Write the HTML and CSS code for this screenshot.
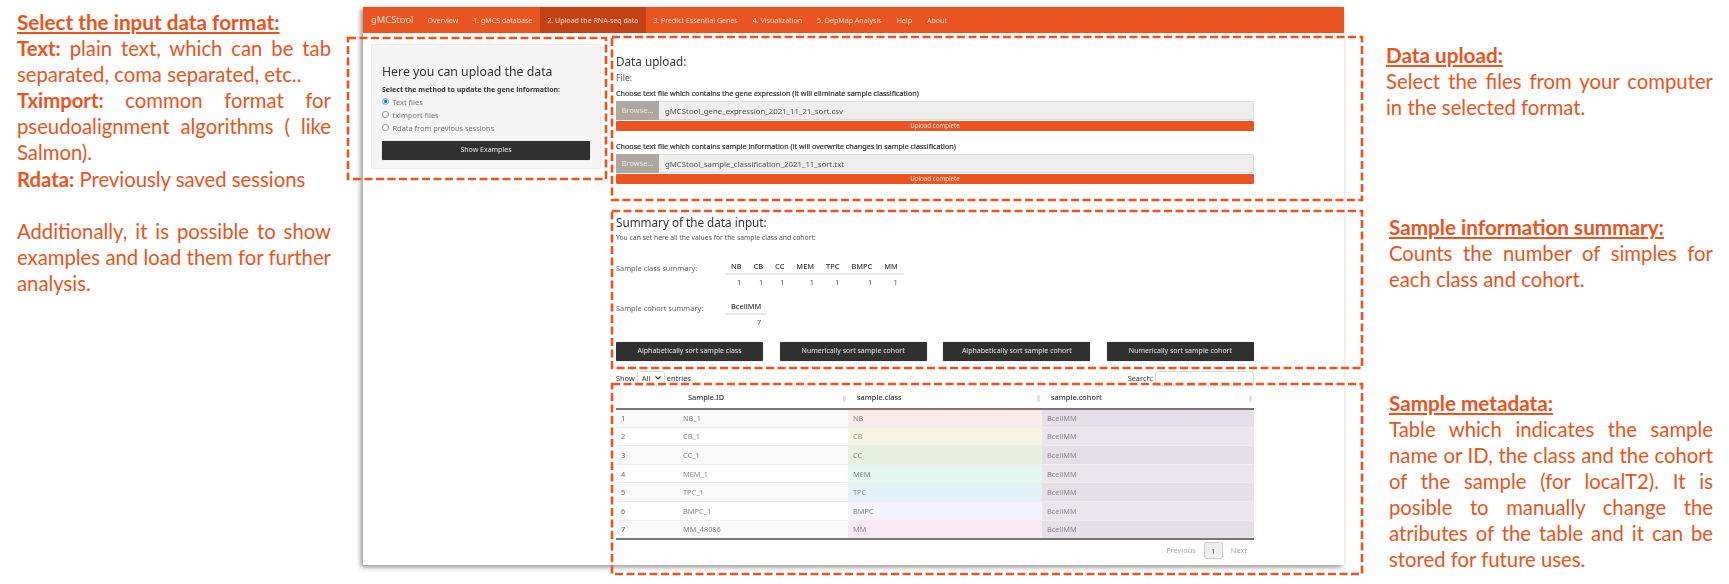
FILE: index.html
```html
<!DOCTYPE html>
<html lang="en">
<head>
    <meta charset="UTF-8">
    <title>gMCStool - Upload the RNA-seq data</title>
    <link rel="stylesheet" href="styles.css">
</head>
<body>
    <div class="figure">
        <div class="notes-left">
            <p class="note-title">Select the input data format:</p>
            <p><strong>Text:</strong> plain text, which can be tab separated, coma separated, etc..</p>
            <p><strong>Tximport:</strong> common format for pseudoalignment algorithms ( like Salmon).</p>
            <p><strong>Rdata:</strong> Previously saved sessions</p>
            <p class="note-gap">Additionally, it is possible to show examples and load them for further analysis.</p>
        </div>

        <div class="app">
            <div class="navbar">
                <span class="brand">gMCStool</span>
                <a class="nav-item">Overview</a>
                <a class="nav-item">1. gMCS database</a>
                <a class="nav-item active">2. Upload the RNA-seq data</a>
                <a class="nav-item">3. Predict Essential Genes</a>
                <a class="nav-item">4. Visualization</a>
                <a class="nav-item">5. DepMap Analysis</a>
                <a class="nav-item">Help</a>
                <a class="nav-item">About</a>
            </div>

            <div class="app-body">
                <div class="sidebar">
                    <div class="well">
                        <h3>Here you can upload the data</h3>
                        <div class="field-label">Select the method to update the gene information:</div>
                        <div class="radio"><span class="radio-dot checked"></span>Text files</div>
                        <div class="radio"><span class="radio-dot"></span>tximport files</div>
                        <div class="radio"><span class="radio-dot"></span>Rdata from previous sessions</div>
                        <div class="btn btn-wide">Show Examples</div>
                    </div>
                </div>

                <div class="main">
                    <h3 class="upload-title">Data upload:</h3>
                    <div class="file-title">File:</div>

                    <div class="field-label">Choose text file which contains the gene expression (it will eliminate sample classification)</div>
                    <div class="file-input">
                        <span class="browse">Browse...</span>
                        <span class="file-name">gMCStool_gene_expression_2021_11_21_sort.csv</span>
                    </div>
                    <div class="progress">Upload complete</div>

                    <div class="field-label second">Choose text file which contains sample information (it will overwrite changes in sample classification)</div>
                    <div class="file-input">
                        <span class="browse">Browse...</span>
                        <span class="file-name">gMCStool_sample_classification_2021_11_sort.txt</span>
                    </div>
                    <div class="progress">Upload complete</div>

                    <h3 class="summary-title">Summary of the data input:</h3>
                    <div class="summary-sub">You can set here all the values for the sample class and cohort:</div>

                    <div class="summary-row">
                        <span class="summary-label">Sample class summary:</span>
                        <table class="mini-table">
                            <tr><th>NB</th><th>CB</th><th>CC</th><th>MEM</th><th>TPC</th><th>BMPC</th><th>MM</th></tr>
                            <tr><td>1</td><td>1</td><td>1</td><td>1</td><td>1</td><td>1</td><td>1</td></tr>
                        </table>
                    </div>
                    <div class="summary-row cohort">
                        <span class="summary-label">Sample cohort summary:</span>
                        <table class="mini-table">
                            <tr><th>BcellMM</th></tr>
                            <tr><td>7</td></tr>
                        </table>
                    </div>

                    <div class="sort-buttons">
                        <div class="btn">Alphabetically sort sample class</div>
                        <div class="btn">Numerically sort sample cohort</div>
                        <div class="btn">Alphabetically sort sample cohort</div>
                        <div class="btn">Numerically sort sample cohort</div>
                    </div>

                    <div class="table-tools">
                        <span>Show</span>
                        <span class="select">All <svg width="6" height="4" viewBox="0 0 6 4"><path d="M0.5 0.5 L3 3 L5.5 0.5" fill="none" stroke="#333" stroke-width="1.2"/></svg></span>
                        <span>entries</span>
                        <span class="search">Search:</span>
                        <span class="search-box"></span>
                    </div>

                    <table class="data-table">
                        <thead>
                            <tr>
                                <th class="col-id">Sample.ID<span class="sort"></span></th>
                                <th>sample.class<span class="sort"></span></th>
                                <th>sample.cohort<span class="sort"></span></th>
                            </tr>
                        </thead>
                        <tbody>
                            <tr class="odd"><td class="id"><span class="row-num">1</span>NB_1</td><td class="c-nb">NB</td><td class="cohort-cell">BcellMM</td></tr>
                            <tr><td class="id"><span class="row-num">2</span>CB_1</td><td class="c-cb">CB</td><td class="cohort-cell">BcellMM</td></tr>
                            <tr class="odd"><td class="id"><span class="row-num">3</span>CC_1</td><td class="c-cc">CC</td><td class="cohort-cell">BcellMM</td></tr>
                            <tr><td class="id"><span class="row-num">4</span>MEM_1</td><td class="c-mem">MEM</td><td class="cohort-cell">BcellMM</td></tr>
                            <tr class="odd"><td class="id"><span class="row-num">5</span>TPC_1</td><td class="c-tpc">TPC</td><td class="cohort-cell">BcellMM</td></tr>
                            <tr><td class="id"><span class="row-num">6</span>BMPC_1</td><td class="c-bmpc">BMPC</td><td class="cohort-cell">BcellMM</td></tr>
                            <tr class="odd"><td class="id"><span class="row-num">7</span>MM_48086</td><td class="c-mm">MM</td><td class="cohort-cell">BcellMM</td></tr>
                        </tbody>
                    </table>

                    <div class="pagination">
                        <span>Previous</span>
                        <span class="page-current">1</span>
                        <span>Next</span>
                    </div>
                </div>
            </div>
        </div>

        <div class="notes-right">
            <div class="note note-upload">
                <p class="note-title">Data upload:</p>
                <p>Select the files from your computer in the selected format.</p>
            </div>
            <div class="note note-summary">
                <p class="note-title">Sample information summary:</p>
                <p>Counts the number of simples for each class and cohort.</p>
            </div>
            <div class="note note-meta">
                <p class="note-title">Sample metadata:</p>
                <p>Table which indicates the sample name or ID, the class and the cohort of the sample (for localT2). It is posible to manually change the atributes of the table and it can be stored for future uses.</p>
            </div>
        </div>

        <!-- dashed highlight boxes drawn over the screenshot -->
        <svg class="highlights" width="1729" height="584">
            <rect x="348" y="38" width="258" height="141"/>
            <rect x="612" y="37" width="750" height="163"/>
            <rect x="612" y="211" width="750" height="157"/>
            <rect x="612" y="384" width="750" height="190"/>
        </svg>
    </div>
</body>
</html>
```

FILE: styles.css
```css
* {
    margin: 0;
    padding: 0;
    box-sizing: border-box;
}

body {
    background: white;
    font-family: "Noto Sans", sans-serif;
    overflow: hidden;
}

.figure {
    position: relative;
    display: flex;
    width: 1729px;
    height: 584px;
}

/* annotations */
.notes-left,
.notes-right {
    font-family: Lato, sans-serif;
    font-size: 20.3px;
    line-height: 26.1px;
    color: #e95420;
    text-align: justify;
}

.notes-left {
    width: 347px;
    padding: 9px 16px 0 17px;
    flex-shrink: 0;
}

.notes-right {
    width: 369px;
    padding-left: 42px;
}

.notes-left p,
.notes-right p {
    margin: 0;
}

.note-title {
    font-weight: bold;
    font-size: 20.7px;
    text-decoration: underline;
    text-align: left;
    white-space: nowrap;
}

.notes-left strong {
    font-weight: bold;
}

.note-gap {
    margin-top: 26px !important;
}

.note-upload {
    margin-top: 42px;
}

.note-summary {
    margin-top: 94px;
    padding-left: 3px;
}

.note-meta {
    margin-top: 97px;
    padding-left: 3px;
}

/* app window */
.app {
    width: 981px;
    height: 558px;
    margin-top: 7px;
    margin-left: 16px;
    flex-shrink: 0;
    background: white;
    box-shadow: -2px 2px 5px rgba(0, 0, 0, 0.45);
    color: #333;
    font-size: 7.4px;
    filter: blur(0.3px);
}

.navbar {
    display: flex;
    height: 26px;
    background: #e95420;
    color: #f6dccf;
    align-items: stretch;
    font-size: 7.05px;
}

.brand {
    font-size: 9.4px;
    line-height: 26px;
    padding: 0 8px;
    width: 57px;
    white-space: nowrap;
}

.nav-item {
    line-height: 26px;
    padding: 0 7.5px;
    white-space: nowrap;
}

.nav-item.active {
    background: #c34113;
}

.app-body {
    display: flex;
}

.sidebar {
    width: 253px;
    padding: 11px 15px 0 8px;
}

.well {
    height: 125px;
    background: #f5f5f5;
    border: 1px solid #ececec;
    border-radius: 2px;
    padding: 19px 10px 0;
}

.well h3 {
    font-size: 12.3px;
    font-weight: normal;
    line-height: 16px;
    color: #333;
}

.field-label {
    font-weight: bold;
    font-size: 7px;
    line-height: 10px;
    color: #333;
    white-space: nowrap;
}

.well .field-label {
    margin-top: 5px;
}

.radio {
    display: flex;
    align-items: center;
    height: 13px;
    color: #777;
}

.well .radio:first-of-type {
    margin-top: 1px;
}

.radio-dot {
    width: 6.5px;
    height: 6.5px;
    border-radius: 50%;
    border: 1px solid #999;
    background: white;
    margin-right: 4px;
}

.radio-dot.checked {
    background: #1a6fe8;
    border-color: #a9c9f5;
    box-shadow: inset 0 0 0 1px #cfe0f8;
}

.btn {
    background: #303030;
    color: #e8e8e8;
    text-align: center;
    font-size: 7px;
    height: 18.5px;
    line-height: 18.5px;
    border-radius: 1px;
    box-shadow: 0 0 1px #777;
    white-space: nowrap;
}

.btn-wide {
    margin-top: 7px;
}

.main {
    width: 638px;
    margin-left: 0;
}

.upload-title,
.summary-title {
    font-size: 11.7px;
    font-weight: normal;
    line-height: 16px;
    color: #333;
}

.upload-title {
    margin-top: 20px;
}

.file-title {
    font-size: 8.6px;
    line-height: 12px;
    margin-top: 3px;
    color: #555;
}

.main .field-label {
    margin-top: 4px;
    font-weight: 400;
    font-size: 7.2px;
    -webkit-text-stroke: 0.2px #333;
}

.main .field-label.second {
    margin-top: 10px;
}

.file-input {
    display: flex;
    height: 19px;
    margin-top: 3px;
    background: #eeeeee;
    border: 1px solid #ddd;
    border-radius: 2px 2px 0 0;
    align-items: center;
}

.browse {
    width: 43px;
    height: 19px;
    margin-left: -1px;
    background: #aea79f;
    color: #e9e6e3;
    line-height: 19px;
    text-align: center;
}

.file-name {
    margin-left: 6px;
    color: #555;
    font-size: 7.8px;
}

.progress {
    height: 10px;
    margin-top: 1px;
    background: #e95420;
    color: #f8e3d9;
    border-radius: 1px;
    text-align: center;
    font-size: 6.2px;
    line-height: 10px;
}

.summary-title {
    margin-top: 30px;
}

.summary-sub {
    font-size: 6.8px;
    line-height: 10px;
    margin-top: 3px;
    color: #555;
}

.summary-row {
    display: flex;
    margin-top: 16px;
    height: 30px;
}

.summary-row.cohort {
    margin-top: 10px;
}

.summary-label {
    width: 109px;
    margin-top: 4px;
    color: #666;
}

.mini-table {
    border-collapse: collapse;
    height: 30px;
}

.mini-table th {
    font-weight: 500;
    text-align: left;
    padding: 0 6px;
    height: 15px;
    border-bottom: 2px solid #e8e8e8;
    color: #333;
    white-space: nowrap;
}

.mini-table td {
    text-align: right;
    padding: 0 6px;
    color: #555;
}

.sort-buttons {
    display: flex;
    gap: 16.5px;
    margin-top: 13px;
}

.sort-buttons .btn {
    width: 147.4px;
}

.table-tools {
    display: flex;
    align-items: center;
    height: 15px;
    margin-top: 10px;
    gap: 2px;
    color: #333;
}

.select {
    display: flex;
    align-items: center;
    justify-content: space-between;
    width: 28px;
    height: 15px;
    padding: 0 3px 0 4px;
    border: 1px solid #ddd;
    border-radius: 2px;
}

.search {
    margin-left: auto;
}

.search-box {
    width: 99px;
    height: 15px;
    border: 1px solid #ddd;
    border-radius: 2px;
}

.data-table {
    width: 638px;
    border-collapse: collapse;
    table-layout: fixed;
    margin-top: 1px;
}

.data-table th {
    position: relative;
    height: 22px;
    font-weight: 500;
    text-align: left;
    padding-left: 9px;
    border-bottom: 2px solid #777;
    color: #333;
}

.data-table th:nth-child(1) {
    width: 232px;
    padding-left: 72px;
}

.data-table th:nth-child(2) {
    width: 194px;
}

.sort {
    position: absolute;
    right: 2px;
    top: 8px;
    width: 3px;
    height: 7px;
    background: #e2e2e2;
    border-radius: 2px;
}

.data-table td {
    height: 18.6px;
    padding-left: 5px;
    color: #8a8a8a;
    border-bottom: 1px solid #eee;
}

.data-table tr:last-child td {
    border-bottom: 2px solid #777;
}

.data-table td.id {
    background: white;
}

.data-table tr.odd td.id {
    background: #f9f9f9;
}

.row-num {
    display: inline-block;
    width: 62px;
    color: #666;
}

.c-nb { background: #faeceb; }
.c-cb { background: #f7f4e3; }
.c-cc { background: #e8f1e1; }
.c-mem { background: #e3f7f1; }
.c-tpc { background: #e0f2f7; }
.c-bmpc { background: #f4f2fc; }
.c-mm { background: #f8e9f5; }

.cohort-cell { background: #ebe5ed; }
.odd .cohort-cell { background: #e5e0e8; }

.pagination {
    display: flex;
    justify-content: flex-end;
    align-items: center;
    gap: 8px;
    margin-top: 2px;
    padding-right: 7px;
    color: #aaa;
}

.page-current {
    width: 19px;
    height: 17px;
    line-height: 17px;
    text-align: center;
    background: #f0f0f0;
    border: 1px solid #ccc;
    border-radius: 2px;
    color: #555;
}

.highlights {
    position: absolute;
    left: 0;
    top: 0;
    pointer-events: none;
}

.highlights rect {
    fill: none;
    stroke: #e95420;
    stroke-width: 2.6;
    stroke-dasharray: 8 3.5;
}
```
